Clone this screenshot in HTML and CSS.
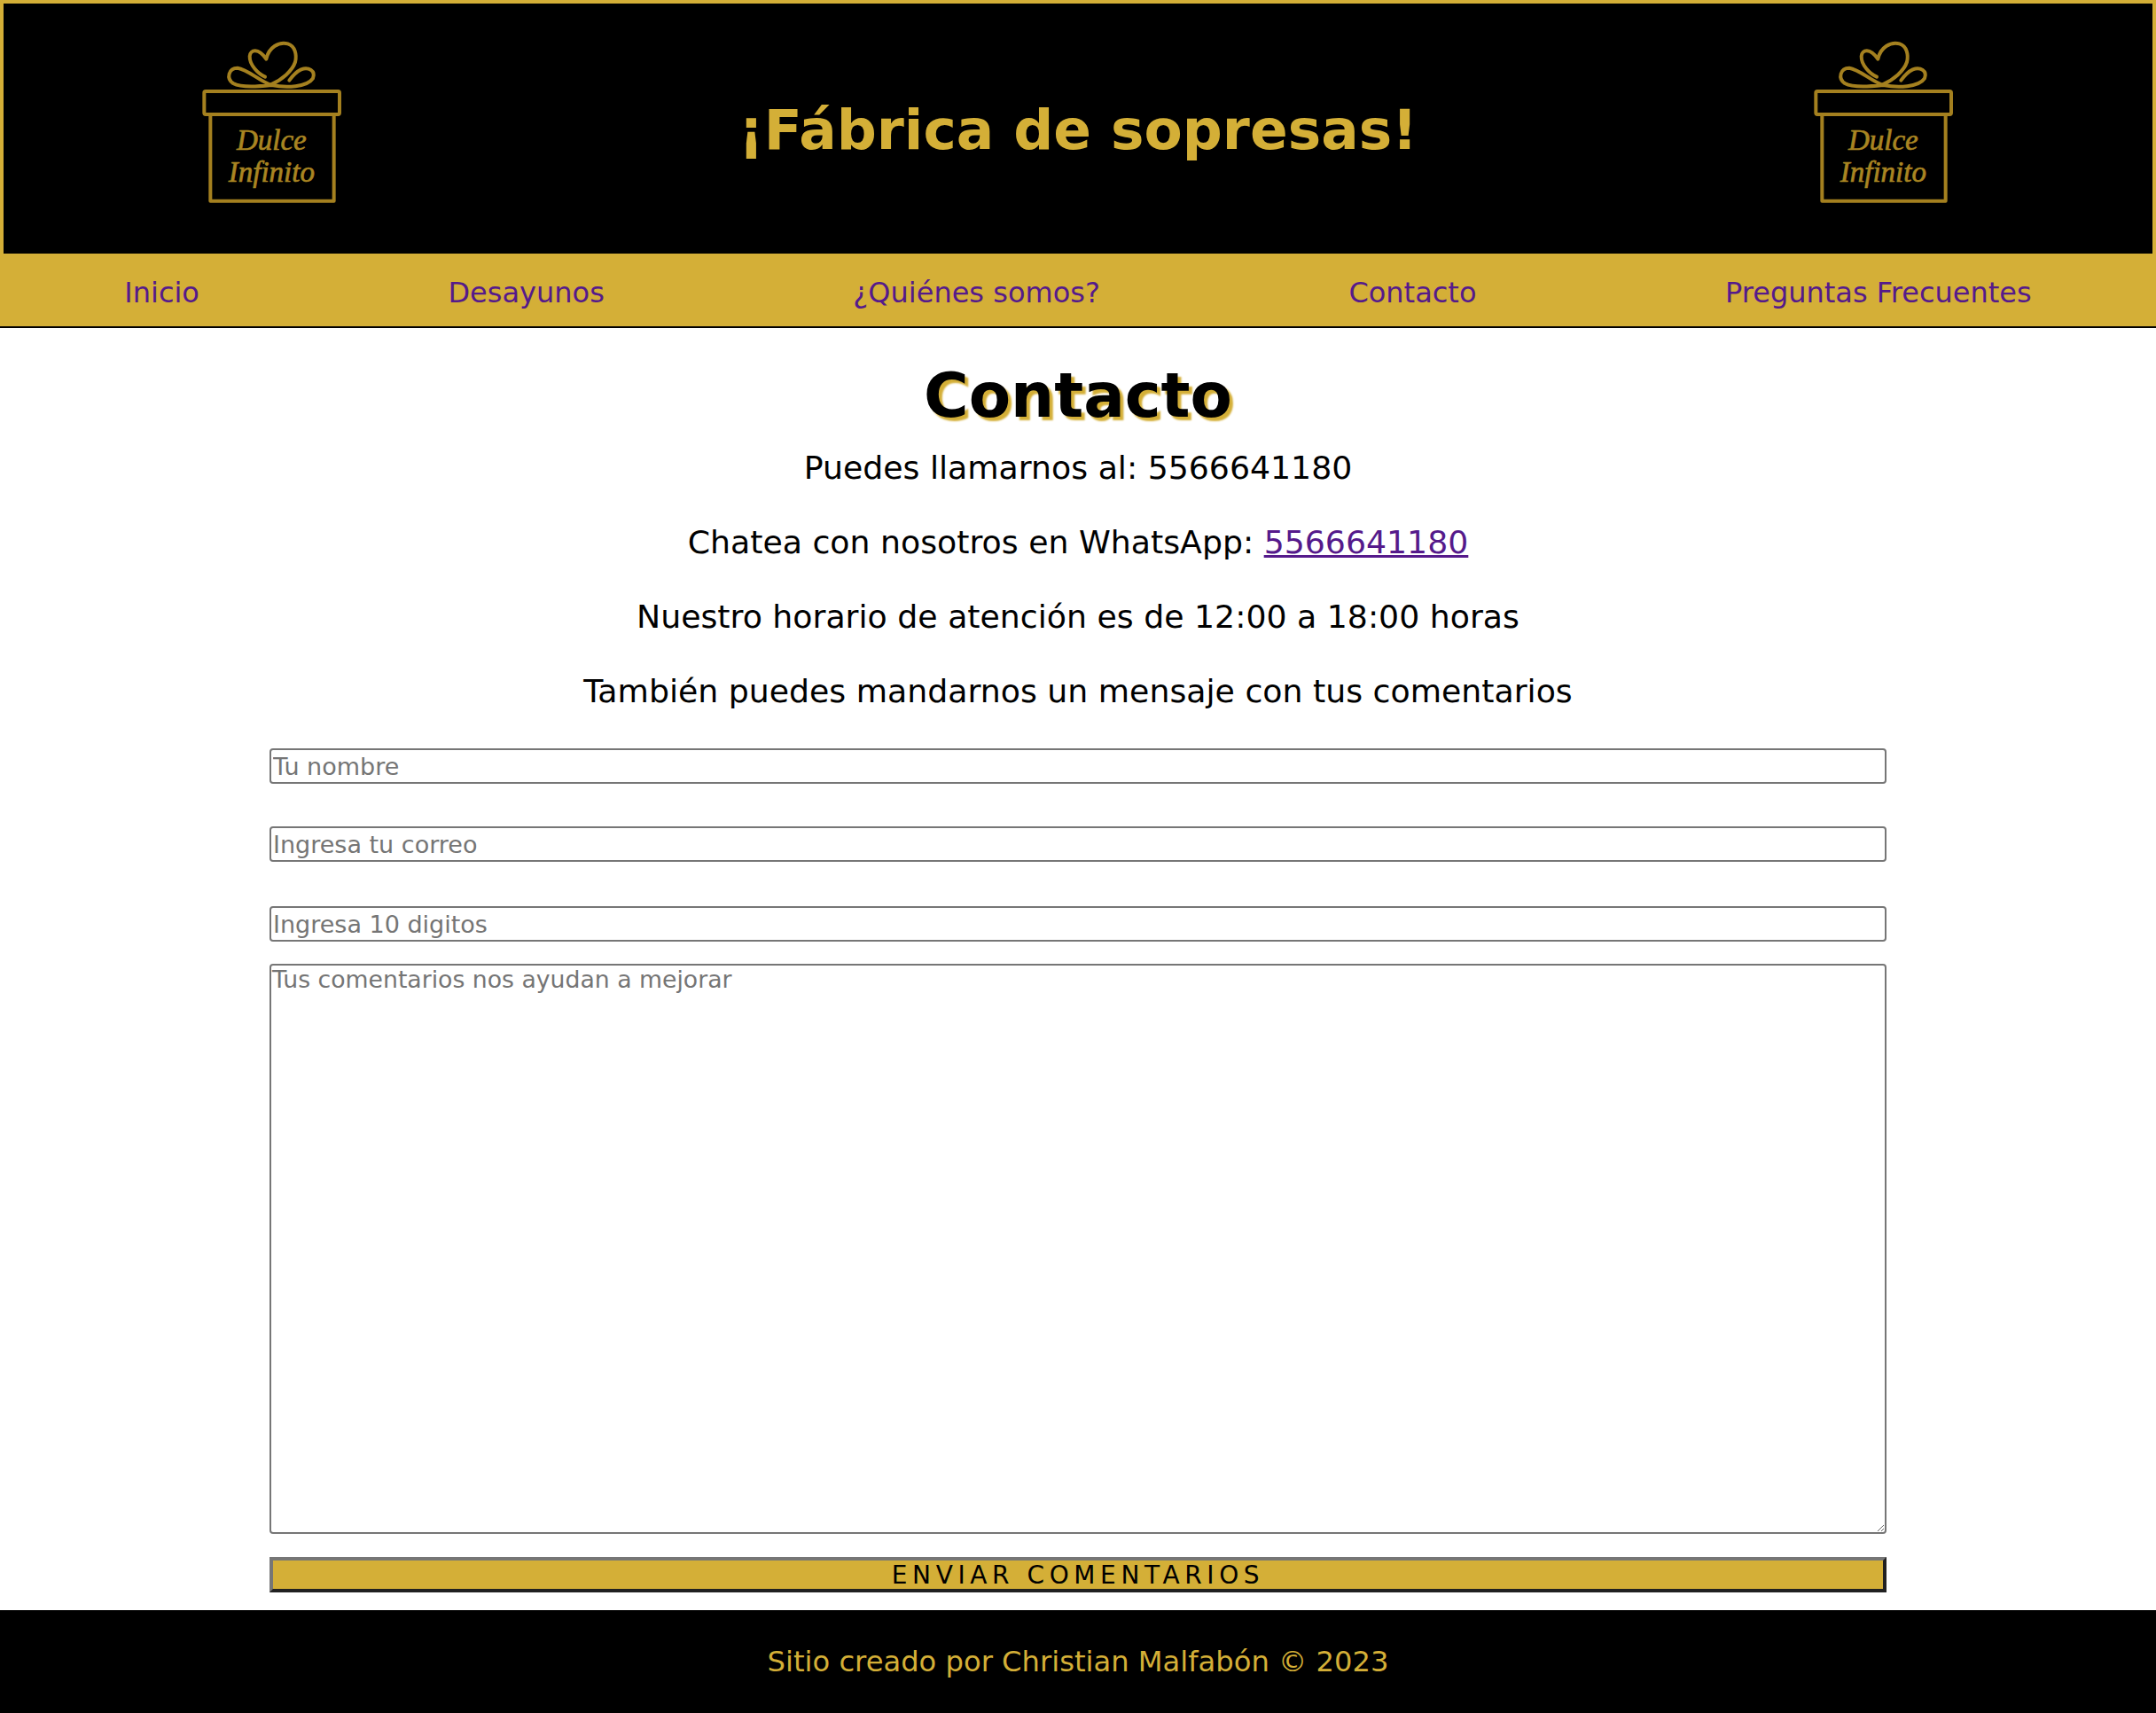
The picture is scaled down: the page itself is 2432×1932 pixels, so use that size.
FILE: index.html
```html
<!DOCTYPE html>
<html lang="es">

<head>
    <meta charset="UTF-8">
    <meta name="viewport" content="width=device-width, initial-scale=1.0">
    <title>Contacto</title>
    <link rel="stylesheet" href="styles.css">
</head>

<body>
    <header class="site-header">
        <svg class="logo" viewBox="112 75 478 555">
            <g class="logo-lines">
                <path d="M328 200C305 190 275 160 276 130C278 108 305 100 332 140C340 100 375 80 405 88C430 96 436 125 430 150C420 180 385 210 348 226" />
                <path d="M350 228C310 215 270 175 235 170C205 170 195 205 220 222C250 238 310 232 350 228C400 238 470 235 490 205C500 180 475 165 450 175C435 182 420 198 410 212" />
                <rect x="122" y="249" width="458" height="78" rx="5" />
                <path d="M143 330V620H561V330" />
            </g>
            <text class="logo-text" x="350" y="446">Dulce</text>
            <text class="logo-text" x="350" y="556">Infinito</text>
        </svg>
        <h2 class="site-title">¡Fábrica de sopresas!</h2>
        <svg class="logo" viewBox="112 75 478 555">
            <g class="logo-lines">
                <path d="M328 200C305 190 275 160 276 130C278 108 305 100 332 140C340 100 375 80 405 88C430 96 436 125 430 150C420 180 385 210 348 226" />
                <path d="M350 228C310 215 270 175 235 170C205 170 195 205 220 222C250 238 310 232 350 228C400 238 470 235 490 205C500 180 475 165 450 175C435 182 420 198 410 212" />
                <rect x="122" y="249" width="458" height="78" rx="5" />
                <path d="M143 330V620H561V330" />
            </g>
            <text class="logo-text" x="350" y="446">Dulce</text>
            <text class="logo-text" x="350" y="556">Infinito</text>
        </svg>
    </header>

    <nav class="site-nav">
        <a href="#">Inicio</a>
        <a href="#">Desayunos</a>
        <a href="#">¿Quiénes somos?</a>
        <a href="#">Contacto</a>
        <a href="#">Preguntas Frecuentes</a>
    </nav>

    <main class="content">
        <h1>Contacto</h1>
        <p>Puedes llamarnos al: 5566641180</p>
        <p>Chatea con nosotros en WhatsApp: <a href="#">5566641180</a></p>
        <p>Nuestro horario de atención es de 12:00 a 18:00 horas</p>
        <p>También puedes mandarnos un mensaje con tus comentarios</p>

        <form class="contact-form">
            <input class="field field-name" type="text" placeholder="Tu nombre">
            <input class="field field-mail" type="email" placeholder="Ingresa tu correo">
            <input class="field field-phone" type="tel" placeholder="Ingresa 10 digitos">
            <textarea class="field field-comments" placeholder="Tus comentarios nos ayudan a mejorar"></textarea>
            <button class="send-button" type="button">ENVIAR COMENTARIOS</button>
        </form>
    </main>

    <footer class="site-footer">Sitio creado por Christian Malfabón © 2023</footer>
</body>

</html>
```

FILE: styles.css
```css
body {
    font-family: 'DejaVu Sans', sans-serif;
    margin: 0;
    padding: 0;
    background: white;
    color: black;
}

a {
    color: #551a8b;
}

.site-header {
    display: flex;
    justify-content: space-around;
    align-items: center;
    height: 282px;
    background: black;
    border: 4px solid #d4af37;
    border-bottom: none;
}

.logo {
    display: block;
    width: 159.33px;
    height: 185px;
    margin-bottom: 15px;
}

.logo-lines {
    fill: none;
    stroke: #a4801f;
    stroke-width: 12;
    stroke-linecap: round;
    stroke-linejoin: round;
}

.logo-text {
    fill: #a98522;
    stroke: #a98522;
    stroke-width: 2;
    font-family: 'Liberation Serif', serif;
    font-style: italic;
    font-size: 99px;
    text-anchor: middle;
}

.site-title {
    margin: 3px 0 0;
    color: #d4af37;
    font-size: 63px;
    font-weight: bold;
}

.site-nav {
    display: flex;
    justify-content: space-around;
    align-items: center;
    box-sizing: border-box;
    height: 84px;
    padding-top: 6px;
    background: #d4af37;
    border-bottom: 2px solid black;
    font-size: 32px;
}

.site-nav a {
    text-decoration: none;
}

.content {
    height: 1446px;
    text-align: center;
    overflow: hidden;
}

h1 {
    margin: 36px 0 21px;
    font-size: 69px;
    line-height: 80px;
    text-shadow: 4px 4px 2px #d4af37;
}

p {
    margin: 0 0 42px;
    font-size: 36.25px;
    line-height: 42px;
}

.contact-form {
    display: flex;
    flex-direction: column;
    width: 75%;
    margin: 43px auto 0;
}

.field {
    box-sizing: border-box;
    width: 100%;
    margin: 0;
    padding: 1px 2px;
    border: 2px solid #767676;
    border-radius: 4px;
    font-family: inherit;
    font-size: 27px;
}

.field-name,
.field-mail,
.field-phone {
    height: 40px;
}

.field-name {
    margin-bottom: 48px;
}

.field-mail {
    margin-bottom: 50px;
}

.field-phone {
    margin-bottom: 25px;
}

.field-comments {
    height: 643px;
    padding: 0 1px;
    font-size: 26.7px;
}

.send-button {
    height: 40px;
    margin-top: 26px;
    padding: 0;
    border: 4px solid;
    border-color: #767676 #212121 #212121 #767676;
    background: #d4af37;
    color: black;
    font-family: inherit;
    font-size: 28px;
    letter-spacing: 0.2em;
}

.site-footer {
    height: 116px;
    line-height: 116px;
    background: black;
    color: #d4af37;
    font-size: 32.2px;
    text-align: center;
}
```
